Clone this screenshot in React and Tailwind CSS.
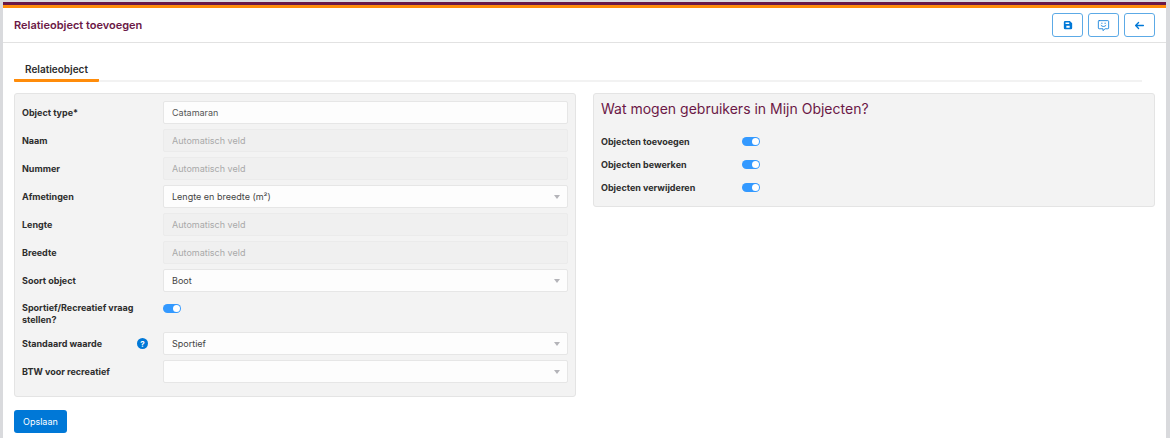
import React from "react";

function SaveIcon() {
  return (
    <svg viewBox="0 0 24 24" className="size-[10px]" fill="currentColor" fillRule="evenodd" aria-hidden="true">
      <path d="M5 2.500h11.500L22 8v11a3 3 0 0 1-3 3H5a3 3 0 0 1-3-3V5.500a3 3 0 0 1 3-3zM6 6v3.500h9V6zM8 13.500v5h8v-5z" />
    </svg>
  );
}

function FeedbackIcon() {
  return (
    <svg viewBox="0 0 24 24" className="size-[13px]" fill="none" stroke="currentColor" strokeWidth="1.5" strokeLinejoin="round" strokeLinecap="round" aria-hidden="true">
      <path d="M4 3h16a1.500 1.500 0 0 1 1.500 1.500v12A1.500 1.500 0 0 1 20 18h-5l-4 3.500V18H4a1.500 1.500 0 0 1-1.500-1.500v-12A1.500 1.500 0 0 1 4 3z" />
      <path d="M9 7.500v1M15 7.500v1M7.500 12c2 2.600 7 2.600 9 0" />
    </svg>
  );
}

function BackIcon() {
  return (
    <svg viewBox="0 0 24 24" className="size-[11px]" fill="none" stroke="currentColor" strokeWidth="2.8" strokeLinejoin="round" strokeLinecap="round" aria-hidden="true">
      <path d="M20.500 12h-17M10 5.500 3.500 12l6.500 6.500" />
    </svg>
  );
}

function IconButton({ label, children }) {
  return (
    <button type="button" aria-label={label} className="flex h-6 w-[31px] items-center justify-center rounded-[3px] border border-[#5caae6] bg-white text-[#0078d7]">
      {children}
    </button>
  );
}

function Toggle({ id }) {
  return (
    <input
      id={id}
      type="checkbox"
      role="switch"
      defaultChecked
      className="flex h-[9px] w-[18px] shrink-0 appearance-none items-center rounded-full bg-[#bbbbbb] px-px before:size-[7px] before:rounded-full before:bg-white checked:justify-end checked:bg-[#3399ff]"
    />
  );
}

function Row({ id, label, help, children }) {
  return (
    <div className="flex items-center">
      <div className="flex w-[141px] shrink-0 items-center justify-between pr-[15px]">
        <label htmlFor={id} className="font-bold">{label}</label>
        {help && (
          <button type="button" aria-label="Uitleg" className="flex size-[11px] items-center justify-center rounded-full bg-[#0078d7] text-[8px] leading-none font-bold text-white">
            ?
          </button>
        )}
      </div>
      {children}
    </div>
  );
}

function TextRow({ id, label, ...rest }) {
  return (
    <Row id={id} label={label}>
      <input
        id={id}
        type="text"
        className="h-[23px] min-w-0 flex-1 rounded-[2px] border border-[#e6e6e6] bg-[#fdfdfd] px-2 text-[#555555] placeholder:text-[#a9a9a9] disabled:border-[#ebebeb] disabled:bg-[#f0f0f0]"
        {...rest}
      />
    </Row>
  );
}

function SelectRow({ id, label, value, help }) {
  return (
    <Row id={id} label={label} help={help}>
      <div className="relative min-w-0 flex-1">
        <select id={id} className="block h-[23px] w-full appearance-none rounded-[2px] border border-[#e6e6e6] bg-[#fdfdfd] px-2 text-[#444444]">
          <option>{value}</option>
        </select>
        <svg viewBox="0 0 6 4" className="pointer-events-none absolute top-[10px] right-2 h-1 w-1.5 text-[#b4b4b9]" fill="currentColor" aria-hidden="true">
          <path d="M0 0h6L3 4z" />
        </svg>
      </div>
    </Row>
  );
}

function PermissionRow({ id, label }) {
  return (
    <div className="flex h-[23px] items-center">
      <label htmlFor={id} className="w-[141px] font-bold">{label}</label>
      <Toggle id={id} />
    </div>
  );
}

export default function App() {
  return (
    <div className="min-h-screen bg-[#d9dadd] pt-0.5 pr-1 pl-[3px] font-[Inter,sans-serif] text-[9px] leading-3 text-[#2d2d2d]">
      <main className="min-h-[calc(100vh-2px)] border-t-3 border-[#6b1846] bg-white">
        <header className="flex items-center justify-between border-t-3 border-b border-t-[#ff8c0a] border-b-[#e2e2e2] px-[11px] pt-[5px] pb-[5px]">
          <h1 className="text-[11px] leading-6 font-semibold text-[#6b1846]">Relatieobject toevoegen</h1>
          <div className="flex gap-[5px]">
            <IconButton label="Opslaan"><SaveIcon /></IconButton>
            <IconButton label="Feedback"><FeedbackIcon /></IconButton>
            <IconButton label="Terug"><BackIcon /></IconButton>
          </div>
        </header>

        <form className="px-[11px] pt-4" onSubmit={(e) => e.preventDefault()}>
          <nav className="mr-[13px] flex border-b-2 border-[#f2f2f2]">
            <a href="#relatieobject" className="-mb-0.5 rounded-b-[1px] border-b-3 border-[#ff8c0a] px-[11px] pt-1 pb-1 text-[10px] leading-3 font-semibold">
              Relatieobject
            </a>
          </nav>

          <div className="mt-[11px] grid grid-cols-2 items-start gap-[17px]">
            <section className="flex flex-col gap-[5px] rounded-[3px] border border-[#e4e4e4] bg-[#f3f3f3] px-[7px] pt-[7px] pb-[13px]">
              <TextRow id="type" label="Object type*" defaultValue="Catamaran" />
              <TextRow id="naam" label="Naam" placeholder="Automatisch veld" disabled />
              <TextRow id="nummer" label="Nummer" placeholder="Automatisch veld" disabled />
              <SelectRow id="afmetingen" label="Afmetingen" value="Lengte en breedte (m²)" />
              <TextRow id="lengte" label="Lengte" placeholder="Automatisch veld" disabled />
              <TextRow id="breedte" label="Breedte" placeholder="Automatisch veld" disabled />
              <SelectRow id="soort" label="Soort object" value="Boot" />
              <div className="flex items-start pt-[5px] pb-px">
                <label htmlFor="vraag" className="w-[141px] shrink-0 pr-4 font-bold">Sportief/Recreatief vraag stellen?</label>
                <span className="flex h-3 items-center"><Toggle id="vraag" /></span>
              </div>
              <SelectRow id="standaard" label="Standaard waarde" value="Sportief" help />
              <SelectRow id="btw" label="BTW voor recreatief" value="" />
            </section>

            <section className="rounded-[3px] border border-[#e4e4e4] bg-[#f3f3f3] px-[7px] pt-[5px] pb-[7px]">
              <h2 className="mb-[11px] text-[14px] leading-5 text-[#6b1846]">Wat mogen gebruikers in Mijn Objecten?</h2>
              <PermissionRow id="toevoegen" label="Objecten toevoegen" />
              <PermissionRow id="bewerken" label="Objecten bewerken" />
              <PermissionRow id="verwijderen" label="Objecten verwijderen" />
            </section>
          </div>

          <button type="submit" className="mt-[13px] h-[23px] rounded-[3px] bg-[#0078d7] px-[9px] text-white">Opslaan</button>
        </form>
      </main>
    </div>
  );
}
